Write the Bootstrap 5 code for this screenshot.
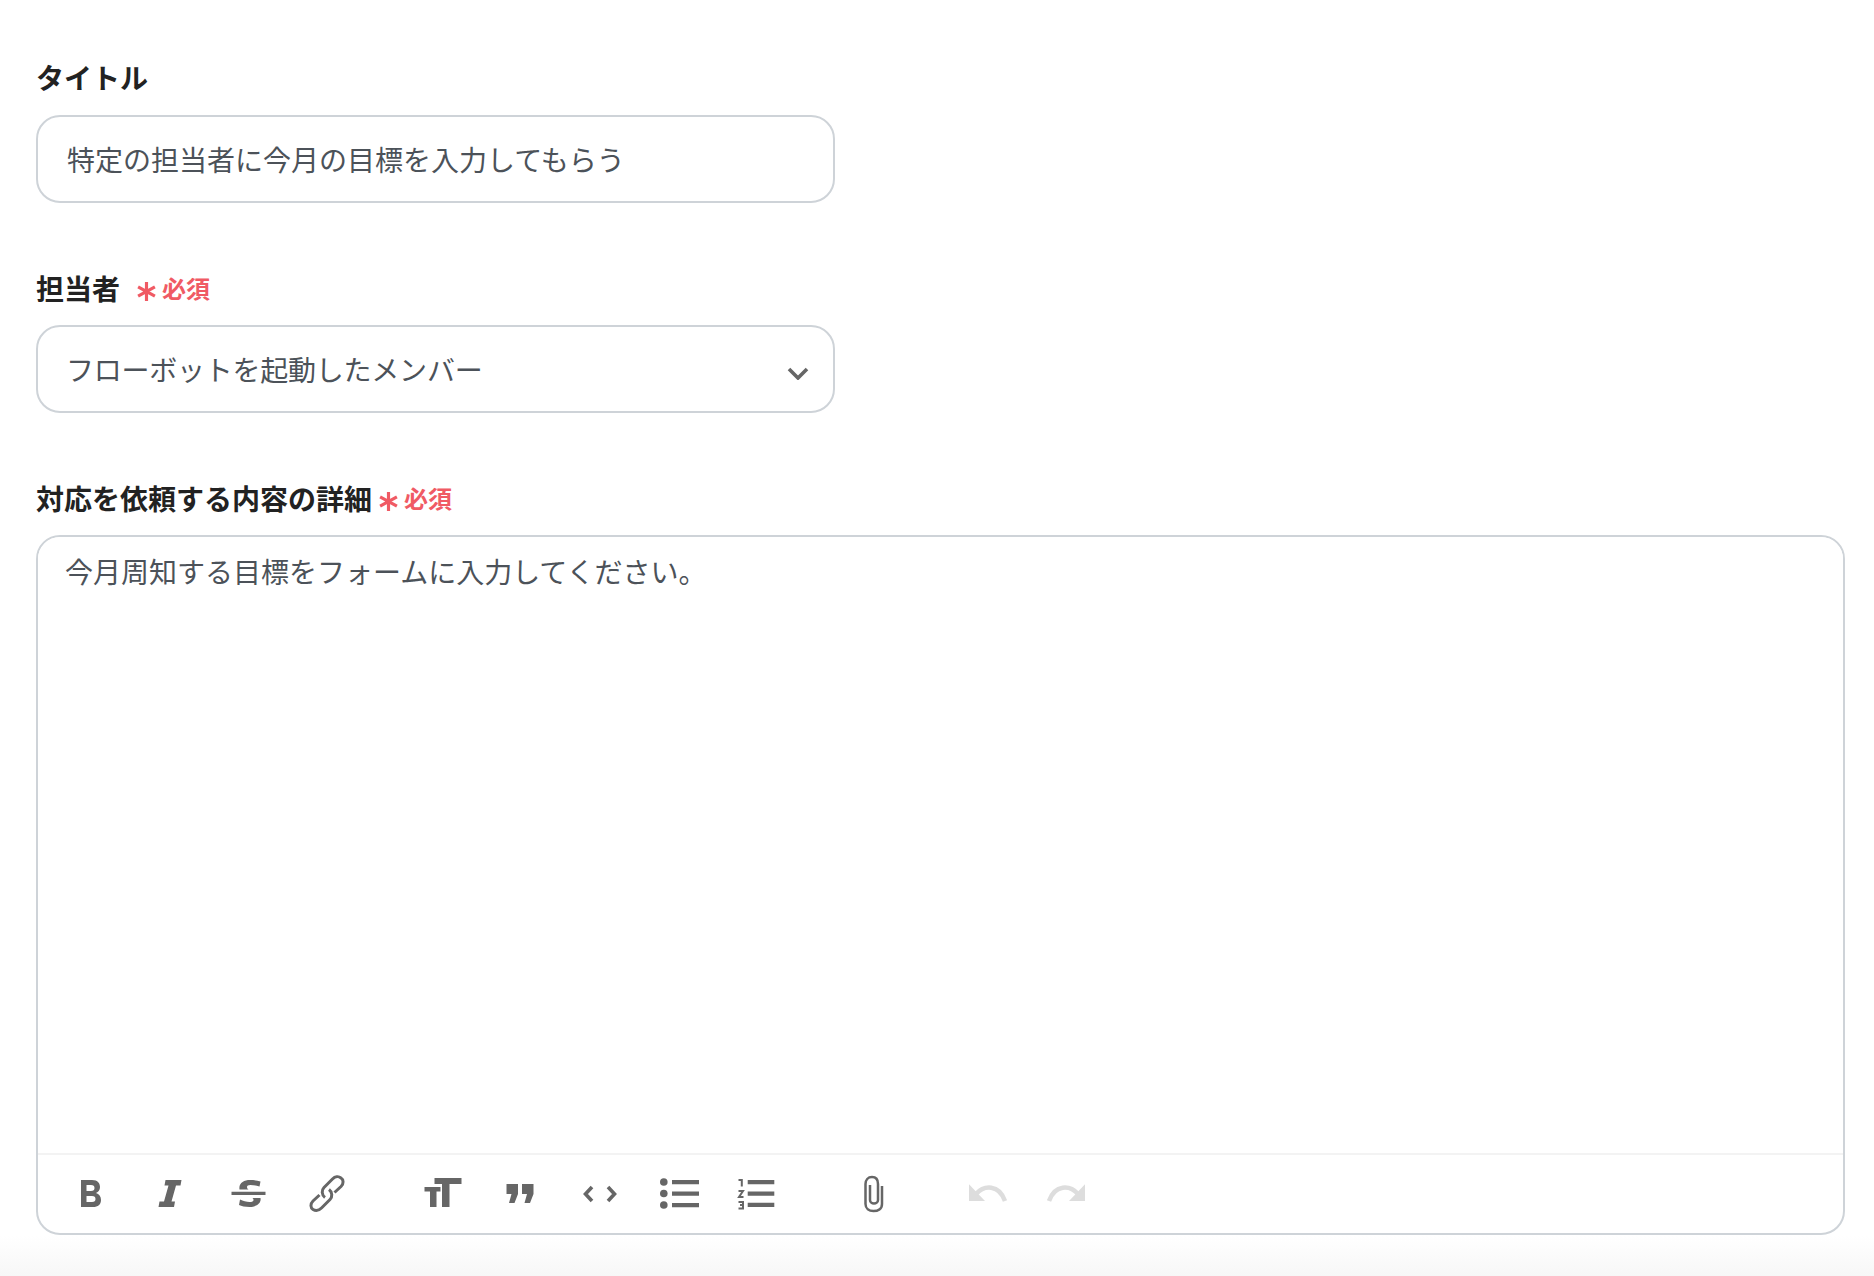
<!DOCTYPE html>
<html lang="ja">
<head>
<meta charset="utf-8">
<title>フォーム</title>
<link href="https://cdn.jsdelivr.net/npm/bootstrap@5.3.0/dist/css/bootstrap.min.css" rel="stylesheet">
<style>
html,body{height:100%}
body{background:linear-gradient(to bottom,#fff 0,#fff 1236px,#f7f7f7 1276px);font-family:"Noto Sans CJK JP","Liberation Sans",sans-serif;overflow:hidden}
.form-wrap{padding:55px 29px 0 36px}
.field-block{margin-bottom:63px}
.field-label{display:flex;align-items:center;height:44px;margin-bottom:15px;font-size:28px;font-weight:700;color:#222;line-height:44px}
.field-block:first-child .field-label{margin-bottom:16px}
.req-mark{display:flex;align-items:center;color:#f05a64;font-size:24px;font-weight:700}
.req-near{margin-left:6px}
.req-star{display:inline-block;width:21px;height:21px;margin-right:5px;margin-top:6px}
.req-star path{stroke:#f05a64;stroke-width:3;fill:none}
.field-box{width:799px;position:relative}
.field-box .form-control,.field-box .form-select{height:88px;border:2px solid #ced3d8;border-radius:24px;padding:0 29px;font-size:28px;color:#4c5259;background-image:none;background-color:#fff;box-shadow:none}
.field-box .form-select{letter-spacing:-.24px;padding-left:28px}
.chev{position:absolute;right:26px;top:42px;width:22px;height:13px;pointer-events:none}
.editor-box{border:2px solid #ced3d8;border-radius:24px;background:#fff;overflow:hidden;height:700px;display:flex;flex-direction:column}
.editor-box textarea{flex:1 1 auto;border:0;border-radius:0;resize:none;padding:12px 27px;font-size:28px;line-height:44px;color:#4c5259;box-shadow:none}
.rte-bar{height:80px;flex:0 0 80px;border-top:2px solid #f3f3f3;padding-left:14px;display:flex;gap:36.5px;align-items:center}
.rte-group{display:flex}
.rte-btn{width:78.7px;height:48px;padding:0;border:0;background:none;display:flex;align-items:center;justify-content:center}
.rte-btn svg{width:48px;height:48px;display:block}
.ic-f{fill:#666}
.ic-s{fill:none;stroke:#666}
.ic-off{fill:#ddd}
.ic-off-s{fill:none;stroke:#ddd}
</style>
</head>
<body>
<main class="form-wrap">
  <div class="field-block">
    <label class="field-label form-label" for="f1">タイトル</label>
    <div class="field-box"><input id="f1" class="form-control" value="特定の担当者に今月の目標を入力してもらう"></div>
  </div>
  <div class="field-block">
    <div class="field-label">担当者
      <span class="req-mark ms-3"><svg class="req-star" viewBox="0 0 20 20"><path d="M10 1v18M2 5.500l16 9M18 5.500l-16 9"/></svg>必須</span>
    </div>
    <div class="field-box">
      <select class="form-select"><option>フローボットを起動したメンバー</option></select>
      <svg class="chev" viewBox="0 0 22 13"><path d="M2 2l9 9 9-9" fill="none" stroke="#666" stroke-width="3.600"/></svg>
    </div>
  </div>
  <div>
    <div class="field-label">対応を依頼する内容の詳細
      <span class="req-mark req-near"><svg class="req-star" viewBox="0 0 20 20"><path d="M10 1v18M2 5.500l16 9M18 5.500l-16 9"/></svg>必須</span>
    </div>
    <div class="editor-box">
      <textarea class="form-control">今月周知する目標をフォームに入力してください。</textarea>
      <div class="rte-bar">
        <div class="rte-group">
          <button class="rte-btn" type="button" aria-label="Bold"><svg viewBox="0 0 48 48"><path class="ic-f" fill-rule="evenodd" d="M14 10H25C31 10 33 13.500 33 17C33 20 31.500 22 29 23C32 24 34 26.500 34 30C34 34.500 31 37 26 37H14ZM19.500 15V21H24C26.500 21 27.500 20 27.500 18C27.500 16 26.500 15 24 15ZM19.500 26V32H25C27.500 32 28.500 31 28.500 29C28.500 27 27.500 26 25 26Z"/></svg></button>
          <button class="rte-btn" type="button" aria-label="Italic"><svg viewBox="0 0 48 48"><path class="ic-f" d="M19.500 10H35.500L34.500 15.500H30L25.500 31.500H29L28 37H12.500L13.500 31.500H18L22.500 15.500H18.500Z"/></svg></button>
          <button class="rte-btn" type="button" aria-label="Strike"><svg viewBox="0 0 48 48"><path class="ic-f" d="M6.500 21.700H40.500V25H6.500ZM14.500 19.500C13.500 13 19 10 25 10C29 10 32.500 10.500 35.500 11.500L34.500 16.500C31.500 15.500 28 15 25.500 15C23 15 22 15.800 22 17C22 18 22.500 19 23.500 19.500ZM27.500 28H35.500C36.500 33 32 37 24.500 37C20 37 16.500 36 14 35L15 29.500C18 31 21.500 32 24.500 32C27 32 28.500 31.500 28.500 30C28.500 29 28 28.500 27.500 28Z"/></svg></button>
          <button class="rte-btn" type="button" aria-label="Link"><svg viewBox="0 0 48 48"><path class="ic-s" stroke-width="3" d="M31.500 22.500L38 16.500C41 13.500 40.500 9.500 38 8C35.500 6 32 6.500 29.500 9L21 17.500C18.500 20 18.500 25 22 27.500M16.500 25L10 31C7 34 7.500 38 10 39.500C12.500 41 16 40.500 18.500 38L27 29.500C29.500 27 29.500 22 26 19.500"/></svg></button>
        </div>
        <div class="rte-group">
          <button class="rte-btn" type="button" aria-label="Heading"><svg viewBox="0 0 48 48"><path class="ic-f" d="M15.500 8H42.500V14H30.500V37H23V14H15.500ZM5.500 17H21.500V21.500H17.500V37H11V21.500H5.500Z"/></svg></button>
          <button class="rte-btn" type="button" aria-label="Quote"><svg viewBox="0 0 48 48"><path class="ic-f" d="M9.500 14H21V24L17.500 33H12L14.500 24H9.500ZM25 14H36.500V24L33 33H27.500L30 24H25Z"/></svg></button>
          <button class="rte-btn" type="button" aria-label="Code"><svg viewBox="0 0 48 48"><path class="ic-s" stroke-width="3.600" d="M16 17L9.500 24L16 31M32 17L38.500 24L32 31"/></svg></button>
          <button class="rte-btn" type="button" aria-label="Bullets"><svg viewBox="0 0 48 48"><circle class="ic-f" cx="8.800" cy="12" r="3.800"/><circle class="ic-f" cx="8.800" cy="23.500" r="3.800"/><circle class="ic-f" cx="8.800" cy="35" r="3.800"/><path class="ic-f" d="M17 10H44V14.300H17ZM17 21.500H44V25.800H17ZM17 33H44V37.300H17Z"/></svg></button>
          <button class="rte-btn" type="button" aria-label="Numbers"><svg viewBox="0 0 48 48"><path class="ic-f" d="M14.700 10H41.300V14.200H14.700ZM14.700 21.500H41.300V25.700H14.700ZM14.700 32.800H41.300V37H14.700Z"/><path class="ic-s" stroke-width="2" d="M5.500 10H8.800V16.500M5.500 21H10L6 27H10.500M5.500 32H10V35H7M10 35V38.500H5.500"/></svg></button>
        </div>
        <div class="rte-group">
          <button class="rte-btn" type="button" aria-label="Attach"><svg viewBox="0 0 48 48"><path class="ic-s" stroke-width="2.500" d="M33 16V34C33 39 29 41 24.500 41C20 41 16.500 38.500 16.500 34V14C16.500 10 19 7 23 7C27 7 29 10 29 14V30C29 32 27 33.500 25 33.500C23 33.500 21 32 21 30V15"/></svg></button>
        </div>
        <div class="rte-group">
          <button class="rte-btn" type="button" aria-label="Undo"><svg viewBox="0 0 48 48"><path class="ic-off" d="M5 14.300L21 31H5Z"/><path class="ic-off-s" stroke-width="4.500" d="M12 24C20 15 35 14 41 31"/></svg></button>
          <button class="rte-btn" type="button" aria-label="Redo"><svg viewBox="0 0 48 48"><path class="ic-off" d="M43 14.300L27 31H43Z"/><path class="ic-off-s" stroke-width="4.500" d="M36 24C28 15 13 14 7 31"/></svg></button>
        </div>
      </div>
    </div>
  </div>
</main>
<script src="https://cdn.jsdelivr.net/npm/bootstrap@5.3.0/dist/js/bootstrap.bundle.min.js"></script>
</body>
</html>
